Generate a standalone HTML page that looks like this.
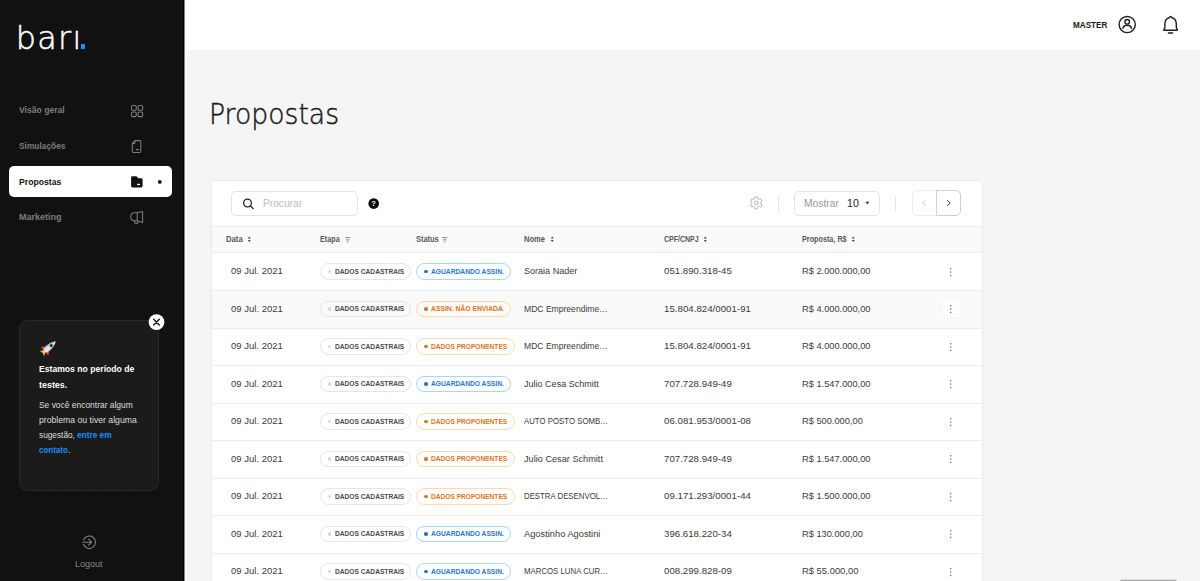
<!DOCTYPE html>
<html lang="pt-BR"><head><meta charset="utf-8"><title>Propostas</title>
<style>
*{box-sizing:border-box;margin:0;padding:0}
html,body{width:1200px;height:581px;overflow:hidden;background:#f5f5f5;font-family:"Liberation Sans",sans-serif}
.t{position:absolute;white-space:nowrap;line-height:1;transform-origin:0 50%;display:block}
#side{position:absolute;left:0;top:0;width:185px;height:581px;background:#111;box-shadow:inset -1px 0 0 #828282,inset -2px 0 0 #000, 1px 0 0 #fff, 2px 0 0 #f9f9f9;z-index:2}
#top{position:absolute;left:185px;top:0;width:1015px;height:50px;background:#fff}
#card{position:absolute;left:211px;top:180px;width:772px;height:420px;background:#fff;box-shadow:inset 0 0 0 1px #e9e9e9;border-radius:5px 5px 0 0}
h1{position:absolute;left:209.4px;top:101px;font-family:"DejaVu Sans","Liberation Sans",sans-serif;font-size:28px;font-weight:200;color:#1b1b1b;line-height:1;white-space:nowrap;transform-origin:0 50%;transform:scaleX(.952);-webkit-text-stroke:.45px #1b1b1b}
.active{position:absolute;left:8.7px;top:166.4px;width:163px;height:30.7px;background:#fff;border-radius:5px}
.notice{position:absolute;left:19px;top:320px;width:140px;height:171px;background:#1b1b1b;border:1px solid #2a2a2a;border-radius:9px}
.logo{position:absolute;left:15.8px;top:22px;font-family:"DejaVu Sans","Liberation Sans",sans-serif;font-weight:200;font-size:31.8px;line-height:1;color:#fff;letter-spacing:1.3px;white-space:nowrap;-webkit-text-stroke:.5px #fff}
.logodot{position:absolute;left:80.7px;top:44.2px;width:4.6px;height:4.6px;background:#1890ff}
svg{position:absolute;overflow:visible}
.thead{position:absolute;left:1px;top:46px;width:770px;height:27px;background:#fafafa;border-top:1px solid #eee;border-bottom:1px solid #eee}
.row{position:absolute;left:1px;width:770px;box-shadow:inset 0 1px 0 #ededed}
.kbox{position:absolute;left:729.4px;width:19.6px;height:19.4px;border-radius:3px;background:#fdfdfd;border:1px solid #f7f7f7}
.row.hov{background:#fafafa}
.pill{position:absolute;height:16.3px;border:1px solid #ddd;border-radius:9px}
.dot{position:absolute;width:3.6px;height:3.6px;margin:-.3px 0 0 -.3px;border-radius:50%}
.keb{left:737.3px;width:3.4px;height:10.2px;fill:#666}
.sort{top:56.2px;width:4.5px;height:6.5px;fill:#444}
.filt{top:57px;width:6px;height:6px;fill:#7c7c7c}
.box{position:absolute;border:1px solid #e4e4e4;border-radius:5px;background:#fff}
.vsep{position:absolute;top:16.3px;width:1px;height:14.4px;background:#e6e6e6}
</style></head>
<body>
<div id="side">
<div class="logo">bari</div><div class="logodot"></div><div style="position:absolute;left:74px;top:22px;width:6px;height:8px;background:#111"></div>
<div class="active"></div>
<div class="notice"></div>
<div style="position:absolute;left:34px;top:494px;width:106px;height:1px;background:repeating-linear-gradient(90deg,#060606 0 1px,transparent 1px 5px)"></div>
<svg width="184.5" height="581" viewBox="0 0 184.5 581" style="left:0;top:0" fill="none" stroke-linecap="round" stroke-linejoin="round">
<g stroke="#7d7d7d" stroke-width="1.05">
<rect x="131.5" y="105.5" width="4.7" height="4.7" rx="1"/><rect x="138" y="105.5" width="4.7" height="4.7" rx="1"/>
<rect x="131.5" y="111.9" width="4.7" height="4.7" rx="1"/><rect x="138" y="111.9" width="4.7" height="4.7" rx="1"/>
<path d="M135 140.6H139.6Q140.8 140.6 140.8 141.8V151.2Q140.8 152.4 139.6 152.4H133.5Q132.3 152.4 132.3 151.2V143.4Z"/>
<path d="M132.5 143.6H134.2Q135 143.6 135 142.8V140.8"/>
<path d="M136.4 149.6H138.6" stroke-width="1.2"/>
<path d="M137.2 212.8H134.4Q130.7 213 130.7 216.8Q130.7 220.6 134.4 220.8H137.2ZM137.2 212.8L142.6 211.5V222.4L137.2 220.8M134.8 221V222.4Q134.8 223.5 136 223.5H136.6Q137.8 223.5 137.8 222.4V221"/>
</g>
<path d="M131.1 177.6Q131.1 176.2 132.5 176.2H135.9Q136.8 176.2 137.3 176.9L138.2 178.2H141.2Q142.6 178.2 142.6 179.6V186.1Q142.6 187.5 141.2 187.5H132.5Q131.1 187.5 131.1 186.1Z" fill="#111"/>
<rect x="137" y="183.8" width="3.1" height="1.3" fill="#fff"/>
<circle cx="159.8" cy="181.9" r="1.9" fill="#111"/>
<circle cx="156.5" cy="322.1" r="7.9" fill="#fff"/>
<path d="M153.7 319.3L159.3 324.9M159.3 319.3L153.7 324.9" stroke="#111" stroke-width="1.4"/>
<g stroke="#858585" stroke-width="1.05">
<path d="M83.5 539.9A6.2 6.2 0 1 1 83.5 544.5"/>
<path d="M82.9 542.2H91.4M88.6 539.2L91.6 542.2L88.6 545.2"/>
</g>
<g transform="translate(50 346.6) rotate(-41)">
<path d="M-6.5 -1.2L-10.8 -3.4L-9.6 0L-10.8 3.4L-6.5 1.2Z" fill="#f9a24a"/>
<path d="M-7 -0.6L-9.6 0L-7 0.6Z" fill="#ffe9c4"/>
<path d="M-2.5 -2.2L-7.2 -5.6L-7.2 -2Z" fill="#f4511e"/>
<path d="M-2.5 2.2L-7.2 5.6L-7.2 2Z" fill="#f4511e"/>
<path d="M-7 -2C-3 -3.4 3 -3.2 7.6 0C3 3.2 -3 3.4 -7 2Z" fill="#dfe6ee"/>
<path d="M-7 -2C-3 -3.4 3 -3.2 7.6 0C3 -1.2 -3 -1.6 -7 -2Z" fill="#8ec3f0"/>
<circle cx="1.6" cy="0" r="1.5" fill="#1c2b3a" stroke="#8a5a2b" stroke-width=".5"/>
</g>
</svg>
<span class="t" style="left:18.60px;top:105.00px;font-size:9.5px;color:#7d7d7d;font-weight:700;transform:scaleX(0.9059);">Visão geral</span>
<span class="t" style="left:18.60px;top:141.00px;font-size:9.5px;color:#7d7d7d;font-weight:700;transform:scaleX(0.8792);">Simulações</span>
<span class="t" style="left:18.60px;top:177.00px;font-size:9.5px;color:#111;font-weight:700;transform:scaleX(0.9109);">Propostas</span>
<span class="t" style="left:18.60px;top:212.00px;font-size:9.5px;color:#7d7d7d;font-weight:700;transform:scaleX(0.9489);">Marketing</span>
<span class="t" style="left:39.30px;top:364.00px;font-size:9.6px;color:#fff;font-weight:700;transform:scaleX(0.8981);">Estamos no período de</span>
<span class="t" style="left:39.30px;top:380.00px;font-size:9.6px;color:#fff;font-weight:700;transform:scaleX(0.9300);">testes.</span>
<span class="t" style="left:39.30px;top:401.00px;font-size:9.0px;color:#ddd;transform:scaleX(0.9370);">Se você encontrar algum</span>
<span class="t" style="left:39.30px;top:416.00px;font-size:9.0px;color:#ddd;transform:scaleX(0.9627);">problema ou tiver alguma</span>
<span class="t" style="left:39.30px;top:431.00px;font-size:9.0px;color:#ddd;transform:scaleX(0.9205);">sugestão,</span>
<span class="t" style="left:77.10px;top:431.00px;font-size:9.0px;color:#1890ff;font-weight:700;transform:scaleX(0.9211);">entre em</span>
<span class="t" style="left:39.30px;top:446.00px;font-size:9.0px;color:#1890ff;font-weight:700;transform:scaleX(0.8848);">contato</span>
<span class="t" style="left:68.30px;top:446.00px;font-size:9.0px;color:#ddd;">.</span>
<span class="t" style="left:75.10px;top:559.00px;font-size:9.75px;color:#858585;transform:scaleX(0.9233);">Logout</span>
</div>
<div id="top">
<svg width="1015" height="50" viewBox="185 0 1015 50" style="left:0;top:0" fill="none" stroke="#1f1f1f" stroke-width="1.4" stroke-linecap="round" stroke-linejoin="round">
<circle cx="1127.2" cy="24.55" r="8.1"/><circle cx="1127.2" cy="21.8" r="2.3"/>
<path d="M1122.9 28.4Q1123.4 25.3 1127.2 25.3Q1131 25.3 1131.5 28.4"/>
<path d="M1170.6 16.4Q1171.3 16.4 1171.6 17.5Q1176.3 18.7 1176.3 24V27.5Q1176.3 28.5 1177.3 29.2Q1177.8 30.3 1176.6 30.3H1164.6Q1163.4 30.3 1163.9 29.2Q1164.9 28.5 1164.9 27.5V24Q1164.9 18.7 1169.6 17.5Q1169.9 16.4 1170.6 16.4Z"/>
<path d="M1168.4 33H1172.6" stroke-width="1.4"/>
</svg>
<span class="t" style="left:887.80px;top:20.00px;font-size:9.4px;color:#1a1a1a;font-weight:700;transform:scaleX(0.8675);">MASTER</span>
</div>
<h1>Propostas</h1>
<div id="card">
<div class="box" style="left:20.3px;top:11.3px;width:126.4px;height:24.7px"></div>
<div class="box" style="left:583.2px;top:11.3px;width:86.1px;height:24.7px"></div>
<div class="vsep" style="left:566.7px"></div><div class="vsep" style="left:684px"></div>
<div class="box" style="left:700.7px;top:10.3px;width:25.6px;height:26px;border-radius:5px 0 0 5px;border-color:#ececec"></div>
<div class="box" style="left:725.3px;top:10.3px;width:25px;height:26px;border-radius:0 5px 5px 0;border-color:#cfcfcf"></div>
<div class="thead"></div>
<svg width="771" height="401" viewBox="211 180 771 401" style="left:0;top:0" fill="none" stroke-linecap="round" stroke-linejoin="round">
<circle cx="247.5" cy="203" r="3.9" stroke="#222" stroke-width="1.3"/><path d="M250.5 206L253.2 208.6" stroke="#222" stroke-width="1.3"/>
<circle cx="373.7" cy="203.6" r="5.3" fill="#0c0c0c"/>
<g stroke="#b3b8bd" stroke-width="1">
<circle cx="756.3" cy="202.9" r="1.9"/>
<path d="M755.03 196.93L757.57 196.93L757.75 198.43L759.44 199.41L760.83 198.82L762.10 201.01L760.90 201.92L760.90 203.88L762.10 204.79L760.83 206.98L759.44 206.39L757.75 207.37L757.57 208.87L755.03 208.87L754.85 207.37L753.16 206.39L751.77 206.98L750.50 204.79L751.70 203.88L751.70 201.92L750.50 201.01L751.77 198.82L753.16 199.41L754.85 198.43Z"/>
</g>
<path d="M866.2 202L868.8 202L867.5 203.8Z" fill="#222" stroke="#222" stroke-width=".6"/>
<path d="M925.4 200.2L922.8 203L925.4 205.8" stroke="#d0d0d0" stroke-width="1"/>
<path d="M947.5 200.4L950.1 203L947.5 205.6" stroke="#3a3a3a" stroke-width="1"/>
</svg>
<svg class="sort" style="left:35.5px" viewBox="0 0 6 8"><path d="M3 0.3 L5 3 H1 Z M3 7.7 L1 5 H5 Z"/></svg><svg class="sort" style="left:339px" viewBox="0 0 6 8"><path d="M3 0.3 L5 3 H1 Z M3 7.7 L1 5 H5 Z"/></svg><svg class="sort" style="left:492.29999999999995px" viewBox="0 0 6 8"><path d="M3 0.3 L5 3 H1 Z M3 7.7 L1 5 H5 Z"/></svg><svg class="sort" style="left:640.3px" viewBox="0 0 6 8"><path d="M3 0.3 L5 3 H1 Z M3 7.7 L1 5 H5 Z"/></svg><svg class="filt" style="left:133.8px" viewBox="0 0 6 6"><rect x="0" y="0.2" width="5.4" height="0.9"/><rect x="0.9" y="2.4" width="3.6" height="0.9"/><rect x="1.9" y="4.5" width="1.6" height="0.9"/></svg><svg class="filt" style="left:231.2px" viewBox="0 0 6 6"><rect x="0" y="0.2" width="5.4" height="0.9"/><rect x="0.9" y="2.4" width="3.6" height="0.9"/><rect x="1.9" y="4.5" width="1.6" height="0.9"/></svg>
<div class="row" style="top:73px;height:37px;box-shadow:none">
<i class="pill" style="top:10.30px;left:108px;width:90.7px;border-color:#e6e6e6"></i><i class="dot" style="top:17.00px;left:115.8px;background:#d9d9d9"></i>
<i class="pill" style="top:10.30px;left:204.2px;width:95.2px;border-color:#a6d6fb"></i><i class="dot" style="top:17.00px;left:212.3px;background:#1f78cf"></i>
<svg class="keb" style="top:13.50px" viewBox="0 0 4 12"><circle cx="2" cy="2" r="0.9"/><circle cx="2" cy="6" r="0.9"/><circle cx="2" cy="10" r="0.9"/></svg>
</div>
<div class="row hov" style="top:110px;height:38px">
<i class="pill" style="top:10.80px;left:108px;width:90.7px;border-color:#e6e6e6"></i><i class="dot" style="top:17.50px;left:115.8px;background:#d9d9d9"></i>
<i class="pill" style="top:10.80px;left:204.2px;width:94.8px;border-color:#ffd9ad"></i><i class="dot" style="top:17.50px;left:212.3px;background:#dc7420"></i>
<i class="kbox" style="top:9.10px"></i><svg class="keb" style="top:14.00px" viewBox="0 0 4 12"><circle cx="2" cy="2" r="0.9"/><circle cx="2" cy="6" r="0.9"/><circle cx="2" cy="10" r="0.9"/></svg>
</div>
<div class="row" style="top:148px;height:37px">
<i class="pill" style="top:10.30px;left:108px;width:90.7px;border-color:#e6e6e6"></i><i class="dot" style="top:17.00px;left:115.8px;background:#d9d9d9"></i>
<i class="pill" style="top:10.30px;left:204.2px;width:98.4px;border-color:#ffd9ad"></i><i class="dot" style="top:17.00px;left:212.3px;background:#dc7420"></i>
<svg class="keb" style="top:13.50px" viewBox="0 0 4 12"><circle cx="2" cy="2" r="0.9"/><circle cx="2" cy="6" r="0.9"/><circle cx="2" cy="10" r="0.9"/></svg>
</div>
<div class="row" style="top:185px;height:38px">
<i class="pill" style="top:10.80px;left:108px;width:90.7px;border-color:#e6e6e6"></i><i class="dot" style="top:17.50px;left:115.8px;background:#d9d9d9"></i>
<i class="pill" style="top:10.80px;left:204.2px;width:95.2px;border-color:#a6d6fb"></i><i class="dot" style="top:17.50px;left:212.3px;background:#1f78cf"></i>
<svg class="keb" style="top:14.00px" viewBox="0 0 4 12"><circle cx="2" cy="2" r="0.9"/><circle cx="2" cy="6" r="0.9"/><circle cx="2" cy="10" r="0.9"/></svg>
</div>
<div class="row" style="top:223px;height:37px">
<i class="pill" style="top:10.30px;left:108px;width:90.7px;border-color:#e6e6e6"></i><i class="dot" style="top:17.00px;left:115.8px;background:#d9d9d9"></i>
<i class="pill" style="top:10.30px;left:204.2px;width:98.4px;border-color:#ffd9ad"></i><i class="dot" style="top:17.00px;left:212.3px;background:#dc7420"></i>
<svg class="keb" style="top:13.50px" viewBox="0 0 4 12"><circle cx="2" cy="2" r="0.9"/><circle cx="2" cy="6" r="0.9"/><circle cx="2" cy="10" r="0.9"/></svg>
</div>
<div class="row" style="top:260px;height:38px">
<i class="pill" style="top:10.80px;left:108px;width:90.7px;border-color:#e6e6e6"></i><i class="dot" style="top:17.50px;left:115.8px;background:#d9d9d9"></i>
<i class="pill" style="top:10.80px;left:204.2px;width:98.4px;border-color:#ffd9ad"></i><i class="dot" style="top:17.50px;left:212.3px;background:#dc7420"></i>
<svg class="keb" style="top:14.00px" viewBox="0 0 4 12"><circle cx="2" cy="2" r="0.9"/><circle cx="2" cy="6" r="0.9"/><circle cx="2" cy="10" r="0.9"/></svg>
</div>
<div class="row" style="top:298px;height:37px">
<i class="pill" style="top:10.30px;left:108px;width:90.7px;border-color:#e6e6e6"></i><i class="dot" style="top:17.00px;left:115.8px;background:#d9d9d9"></i>
<i class="pill" style="top:10.30px;left:204.2px;width:98.4px;border-color:#ffd9ad"></i><i class="dot" style="top:17.00px;left:212.3px;background:#dc7420"></i>
<svg class="keb" style="top:13.50px" viewBox="0 0 4 12"><circle cx="2" cy="2" r="0.9"/><circle cx="2" cy="6" r="0.9"/><circle cx="2" cy="10" r="0.9"/></svg>
</div>
<div class="row" style="top:335px;height:38px">
<i class="pill" style="top:10.80px;left:108px;width:90.7px;border-color:#e6e6e6"></i><i class="dot" style="top:17.50px;left:115.8px;background:#d9d9d9"></i>
<i class="pill" style="top:10.80px;left:204.2px;width:95.2px;border-color:#a6d6fb"></i><i class="dot" style="top:17.50px;left:212.3px;background:#1f78cf"></i>
<svg class="keb" style="top:14.00px" viewBox="0 0 4 12"><circle cx="2" cy="2" r="0.9"/><circle cx="2" cy="6" r="0.9"/><circle cx="2" cy="10" r="0.9"/></svg>
</div>
<div class="row" style="top:373px;height:37px">
<i class="pill" style="top:10.30px;left:108px;width:90.7px;border-color:#e6e6e6"></i><i class="dot" style="top:17.00px;left:115.8px;background:#d9d9d9"></i>
<i class="pill" style="top:10.30px;left:204.2px;width:95.2px;border-color:#a6d6fb"></i><i class="dot" style="top:17.00px;left:212.3px;background:#1f78cf"></i>
<svg class="keb" style="top:13.50px" viewBox="0 0 4 12"><circle cx="2" cy="2" r="0.9"/><circle cx="2" cy="6" r="0.9"/><circle cx="2" cy="10" r="0.9"/></svg>
</div>
<span class="t" style="left:51.60px;top:19.00px;font-size:10px;color:#bdbdbd;transform:scaleX(1.0184);">Procurar</span>
<span class="t" style="left:593.00px;top:19.00px;font-size:10px;color:#999;transform:scaleX(1.0279);">Mostrar</span>
<span class="t" style="left:635.80px;top:19.00px;font-size:10px;color:#222;transform:scaleX(1.0636);">10</span>
<span class="t" style="left:160.20px;top:20.00px;font-size:7.5px;color:#fff;font-weight:700;">?</span>
<span class="t" style="left:14.50px;top:55.00px;font-size:8.3px;color:#585858;font-weight:700;transform:scaleX(0.9278);">Data</span>
<span class="t" style="left:108.60px;top:55.00px;font-size:8.3px;color:#585858;font-weight:700;transform:scaleX(0.8739);">Etapa</span>
<span class="t" style="left:204.60px;top:55.00px;font-size:8.3px;color:#585858;font-weight:700;transform:scaleX(0.8960);">Status</span>
<span class="t" style="left:313.00px;top:55.00px;font-size:8.3px;color:#585858;font-weight:700;transform:scaleX(0.9043);">Nome</span>
<span class="t" style="left:453.00px;top:55.00px;font-size:8.3px;color:#585858;font-weight:700;transform:scaleX(0.8415);">CPF/CNPJ</span>
<span class="t" style="left:590.80px;top:55.00px;font-size:8.3px;color:#585858;font-weight:700;transform:scaleX(0.8725);">Proposta, R$</span>
<span class="t" style="left:19.50px;top:86.00px;font-size:9.7px;color:#3a3a3a;transform:scaleX(0.9811);">09 Jul. 2021</span>
<span class="t" style="left:123.60px;top:88.00px;font-size:7.8px;color:#4a4a4a;font-weight:700;transform:scaleX(0.8506);">DADOS CADASTRAIS</span>
<span class="t" style="left:220.20px;top:88.00px;font-size:7.8px;color:#1f78cf;font-weight:700;transform:scaleX(0.8565);">AGUARDANDO ASSIN.</span>
<span class="t" style="left:313.20px;top:86.00px;font-size:9.7px;color:#3a3a3a;transform:scaleX(0.9333);">Soraia Nader</span>
<span class="t" style="left:453.10px;top:86.00px;font-size:9.7px;color:#3a3a3a;transform:scaleX(0.9985);">051.890.318-45</span>
<span class="t" style="left:590.90px;top:86.00px;font-size:9.7px;color:#3a3a3a;transform:scaleX(0.9556);">R$ 2.000.000,00</span>
<span class="t" style="left:19.50px;top:124.00px;font-size:9.7px;color:#3a3a3a;transform:scaleX(0.9811);">09 Jul. 2021</span>
<span class="t" style="left:123.60px;top:125.00px;font-size:7.8px;color:#4a4a4a;font-weight:700;transform:scaleX(0.8506);">DADOS CADASTRAIS</span>
<span class="t" style="left:220.20px;top:125.00px;font-size:7.8px;color:#dc7420;font-weight:700;transform:scaleX(0.8687);">ASSIN. NÃO ENVIADA</span>
<span class="t" style="left:313.20px;top:124.00px;font-size:9.7px;color:#3a3a3a;transform:scaleX(0.8842);">MDC Empreendime…</span>
<span class="t" style="left:453.10px;top:124.00px;font-size:9.7px;color:#3a3a3a;transform:scaleX(1.0023);">15.804.824/0001-91</span>
<span class="t" style="left:590.90px;top:124.00px;font-size:9.7px;color:#3a3a3a;transform:scaleX(0.9556);">R$ 4.000.000,00</span>
<span class="t" style="left:19.50px;top:161.00px;font-size:9.7px;color:#3a3a3a;transform:scaleX(0.9811);">09 Jul. 2021</span>
<span class="t" style="left:123.60px;top:163.00px;font-size:7.8px;color:#4a4a4a;font-weight:700;transform:scaleX(0.8506);">DADOS CADASTRAIS</span>
<span class="t" style="left:220.20px;top:163.00px;font-size:7.8px;color:#dc7420;font-weight:700;transform:scaleX(0.8456);">DADOS PROPONENTES</span>
<span class="t" style="left:313.20px;top:161.00px;font-size:9.7px;color:#3a3a3a;transform:scaleX(0.8842);">MDC Empreendime…</span>
<span class="t" style="left:453.10px;top:161.00px;font-size:9.7px;color:#3a3a3a;transform:scaleX(1.0023);">15.804.824/0001-91</span>
<span class="t" style="left:590.90px;top:161.00px;font-size:9.7px;color:#3a3a3a;transform:scaleX(0.9556);">R$ 4.000.000,00</span>
<span class="t" style="left:19.50px;top:199.00px;font-size:9.7px;color:#3a3a3a;transform:scaleX(0.9811);">09 Jul. 2021</span>
<span class="t" style="left:123.60px;top:200.00px;font-size:7.8px;color:#4a4a4a;font-weight:700;transform:scaleX(0.8506);">DADOS CADASTRAIS</span>
<span class="t" style="left:220.20px;top:200.00px;font-size:7.8px;color:#1f78cf;font-weight:700;transform:scaleX(0.8565);">AGUARDANDO ASSIN.</span>
<span class="t" style="left:313.20px;top:199.00px;font-size:9.7px;color:#3a3a3a;transform:scaleX(0.9325);">Julio Cesa Schmitt</span>
<span class="t" style="left:453.10px;top:199.00px;font-size:9.7px;color:#3a3a3a;transform:scaleX(0.9985);">707.728.949-49</span>
<span class="t" style="left:590.90px;top:199.00px;font-size:9.7px;color:#3a3a3a;transform:scaleX(0.9556);">R$ 1.547.000,00</span>
<span class="t" style="left:19.50px;top:236.00px;font-size:9.7px;color:#3a3a3a;transform:scaleX(0.9811);">09 Jul. 2021</span>
<span class="t" style="left:123.60px;top:238.00px;font-size:7.8px;color:#4a4a4a;font-weight:700;transform:scaleX(0.8506);">DADOS CADASTRAIS</span>
<span class="t" style="left:220.20px;top:238.00px;font-size:7.8px;color:#dc7420;font-weight:700;transform:scaleX(0.8456);">DADOS PROPONENTES</span>
<span class="t" style="left:313.20px;top:236.00px;font-size:9.7px;color:#3a3a3a;transform:scaleX(0.8077);">AUTO POSTO SOMB…</span>
<span class="t" style="left:453.10px;top:236.00px;font-size:9.7px;color:#3a3a3a;transform:scaleX(1.0023);">06.081.953/0001-08</span>
<span class="t" style="left:590.90px;top:236.00px;font-size:9.7px;color:#3a3a3a;transform:scaleX(0.9563);">R$ 500.000,00</span>
<span class="t" style="left:19.50px;top:274.00px;font-size:9.7px;color:#3a3a3a;transform:scaleX(0.9811);">09 Jul. 2021</span>
<span class="t" style="left:123.60px;top:275.00px;font-size:7.8px;color:#4a4a4a;font-weight:700;transform:scaleX(0.8506);">DADOS CADASTRAIS</span>
<span class="t" style="left:220.20px;top:275.00px;font-size:7.8px;color:#dc7420;font-weight:700;transform:scaleX(0.8456);">DADOS PROPONENTES</span>
<span class="t" style="left:313.20px;top:274.00px;font-size:9.7px;color:#3a3a3a;transform:scaleX(0.9458);">Julio Cesar Schmitt</span>
<span class="t" style="left:453.10px;top:274.00px;font-size:9.7px;color:#3a3a3a;transform:scaleX(0.9985);">707.728.949-49</span>
<span class="t" style="left:590.90px;top:274.00px;font-size:9.7px;color:#3a3a3a;transform:scaleX(0.9556);">R$ 1.547.000,00</span>
<span class="t" style="left:19.50px;top:311.00px;font-size:9.7px;color:#3a3a3a;transform:scaleX(0.9811);">09 Jul. 2021</span>
<span class="t" style="left:123.60px;top:313.00px;font-size:7.8px;color:#4a4a4a;font-weight:700;transform:scaleX(0.8506);">DADOS CADASTRAIS</span>
<span class="t" style="left:220.20px;top:313.00px;font-size:7.8px;color:#dc7420;font-weight:700;transform:scaleX(0.8456);">DADOS PROPONENTES</span>
<span class="t" style="left:313.20px;top:311.00px;font-size:9.7px;color:#3a3a3a;transform:scaleX(0.8077);">DESTRA DESENVOL…</span>
<span class="t" style="left:453.10px;top:311.00px;font-size:9.7px;color:#3a3a3a;transform:scaleX(1.0023);">09.171.293/0001-44</span>
<span class="t" style="left:590.90px;top:311.00px;font-size:9.7px;color:#3a3a3a;transform:scaleX(0.9556);">R$ 1.500.000,00</span>
<span class="t" style="left:19.50px;top:349.00px;font-size:9.7px;color:#3a3a3a;transform:scaleX(0.9811);">09 Jul. 2021</span>
<span class="t" style="left:123.60px;top:350.00px;font-size:7.8px;color:#4a4a4a;font-weight:700;transform:scaleX(0.8506);">DADOS CADASTRAIS</span>
<span class="t" style="left:220.20px;top:350.00px;font-size:7.8px;color:#1f78cf;font-weight:700;transform:scaleX(0.8565);">AGUARDANDO ASSIN.</span>
<span class="t" style="left:313.20px;top:349.00px;font-size:9.7px;color:#3a3a3a;transform:scaleX(0.9587);">Agostinho Agostini</span>
<span class="t" style="left:453.10px;top:349.00px;font-size:9.7px;color:#3a3a3a;transform:scaleX(0.9985);">396.618.220-34</span>
<span class="t" style="left:590.90px;top:349.00px;font-size:9.7px;color:#3a3a3a;transform:scaleX(0.9563);">R$ 130.000,00</span>
<span class="t" style="left:19.50px;top:386.00px;font-size:9.7px;color:#3a3a3a;transform:scaleX(0.9811);">09 Jul. 2021</span>
<span class="t" style="left:123.60px;top:388.00px;font-size:7.8px;color:#4a4a4a;font-weight:700;transform:scaleX(0.8506);">DADOS CADASTRAIS</span>
<span class="t" style="left:220.20px;top:388.00px;font-size:7.8px;color:#1f78cf;font-weight:700;transform:scaleX(0.8565);">AGUARDANDO ASSIN.</span>
<span class="t" style="left:313.20px;top:386.00px;font-size:9.7px;color:#3a3a3a;transform:scaleX(0.8077);">MARCOS LUNA CUR…</span>
<span class="t" style="left:453.10px;top:386.00px;font-size:9.7px;color:#3a3a3a;transform:scaleX(0.9985);">008.299.828-09</span>
<span class="t" style="left:590.90px;top:386.00px;font-size:9.7px;color:#3a3a3a;transform:scaleX(0.9690);">R$ 55.000,00</span>
</div>
<div style="position:absolute;left:1120px;top:579px;width:57px;height:4px;background:#a9a9a9;border-top:1px solid #dcdcdc;border-radius:2px 2px 0 0"></div>
</body></html>
